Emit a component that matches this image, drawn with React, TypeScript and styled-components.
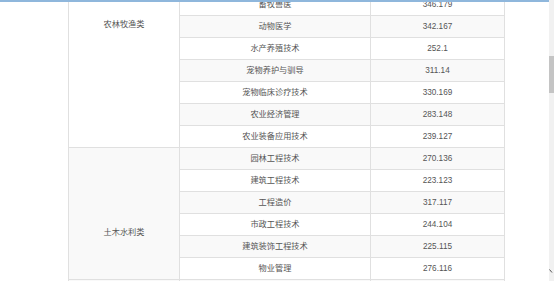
import styled, { createGlobalStyle } from "styled-components"

const GlobalStyle = createGlobalStyle`
	html, body {
		margin: 0;
		padding: 0;
		background: #ffffff;
		overflow: hidden;
	}
	body {
		font-family: "Liberation Sans", "Noto Sans CJK SC", sans-serif;
	}
`

type Major = { name: string, score: string }
type Group = { category: string, textOffset: number, majors: Major[] }

const groups: Group[] = [
	{
		category: "农林牧渔类",
		textOffset: 25,
		majors: [
			{ name: "畜牧兽医", score: "346.179" },
			{ name: "动物医学", score: "342.167" },
			{ name: "水产养殖技术", score: "252.1" },
			{ name: "宠物养护与驯导", score: "311.14" },
			{ name: "宠物临床诊疗技术", score: "330.169" },
			{ name: "农业经济管理", score: "283.148" },
			{ name: "农业装备应用技术", score: "239.127" }
		]
	},
	{
		category: "土木水利类",
		textOffset: 79,
		majors: [
			{ name: "园林工程技术", score: "270.136" },
			{ name: "建筑工程技术", score: "223.123" },
			{ name: "工程造价", score: "317.117" },
			{ name: "市政工程技术", score: "244.104" },
			{ name: "建筑装饰工程技术", score: "225.115" },
			{ name: "物业管理", score: "276.116" }
		]
	}
]

export default function App() {
	return (
		<>
			<GlobalStyle/>
			<Page>
				<Main>
					<TopBar/>
					<Viewport>
						<ScoreTable>
							<colgroup>
								<col style={{ width: 111 }}/>
								<col style={{ width: 191 }}/>
								<col style={{ width: 134 }}/>
							</colgroup>
							<tbody>
								{groups.map(group => group.majors.map((major, i) => (
									<Row key={group.category + major.name}>
										{i === 0 && (
											<CategoryCell rowSpan={group.majors.length} $offset={group.textOffset}>
												{group.category}
											</CategoryCell>
										)}
										<Cell>{major.name}</Cell>
										<Cell>{major.score}</Cell>
									</Row>
								)))}
								<Row>
									<Cell/>
									<Cell/>
									<Cell/>
								</Row>
							</tbody>
						</ScoreTable>
					</Viewport>
				</Main>
				<ScrollTrack>
					<ScrollThumb/>
					<ScrollArrow>
						<svg width="5" height="6" viewBox="0 0 5 6">
							<path d="M0.5 1.5 L3 4.5" stroke="#555" strokeWidth="1" fill="none"/>
						</svg>
					</ScrollArrow>
				</ScrollTrack>
			</Page>
		</>
	)
}

const Page = styled.div`
	display: flex;
	width: 554px;
	height: 281px;
	overflow: hidden;
`

const Main = styled.div`
	display: flex;
	flex-direction: column;
	flex: 1;
	min-width: 0;
`

const TopBar = styled.div`
	flex: 0 0 2px;
	background-color: #8fb7dc;
	position: relative;
	z-index: 1;
`

const Viewport = styled.div`
	flex: 1;
	overflow: hidden;
`

const ScoreTable = styled.table`
	margin: -9px 0 0 68px;
	width: 437px;
	table-layout: fixed;
	border-collapse: collapse;
	border: 1px solid #e0e0e0;
	font-size: 8.2px;
	color: #555555;
`

const Row = styled.tr`
	height: 22px;
	background-color: #ffffff;

	&:nth-child(even) {
		background-color: #f9f9f9;
	}
`

const Cell = styled.td`
	padding: 0;
	border: 1px solid #e0e0e0;
	text-align: center;
	vertical-align: middle;
	line-height: 12px;
	white-space: nowrap;
	font-family: "Liberation Sans", "Noto Sans CJK SC", sans-serif;
`

const CategoryCell = styled(Cell)<{ $offset: number }>`
	vertical-align: top;
	padding-top: ${({ $offset }) => $offset}px;
`

const ScrollTrack = styled.div`
	display: flex;
	flex-direction: column;
	flex: 0 0 5px;
	background-color: #f1f1f1;
`

const ScrollThumb = styled.div`
	margin-top: 56px;
	height: 37px;
	background-color: #c4c4c4;
`

const ScrollArrow = styled.div`
	margin-top: auto;
	margin-bottom: 7px;
	display: flex;
	justify-content: flex-start;
`
